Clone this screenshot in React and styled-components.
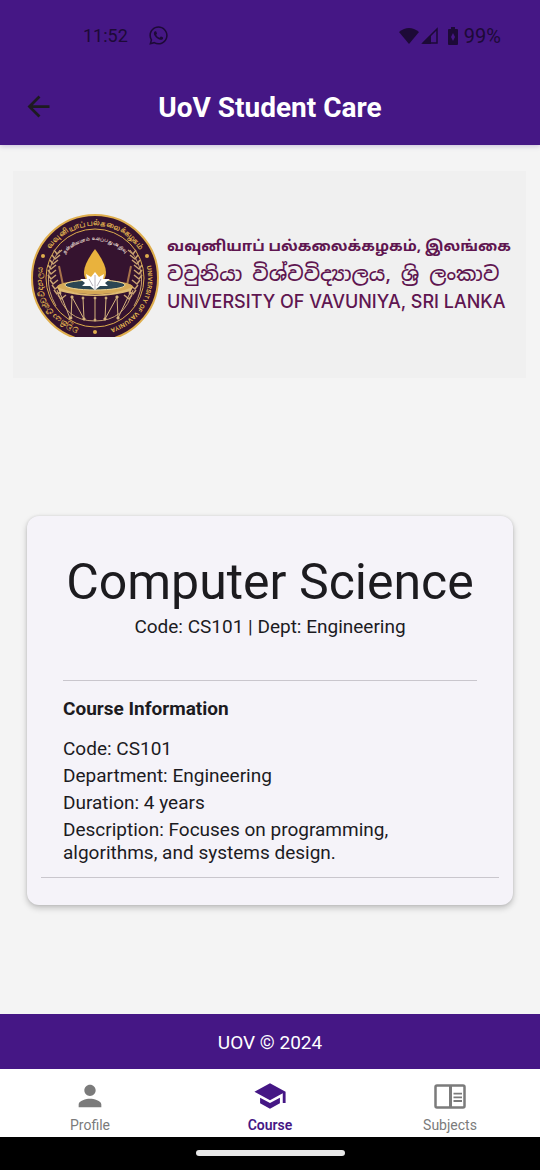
import React from 'react';
import styled, { createGlobalStyle } from 'styled-components';
import { MdArrowBack, MdPerson, MdSchool } from 'react-icons/md';
import { FaWhatsapp } from 'react-icons/fa';

const PURPLE = '#451785';
const PLUM = '#5f1650';
const GOLD = '#dfae4d';

const GlobalStyle = createGlobalStyle`
  *, *::before, *::after { box-sizing: border-box; }
  body {
    margin: 0;
    background: #f4f4f4;
    color: #1c1b1f;
    font-family: Roboto, "Noto Sans", sans-serif;
  }
`;

const Screen = styled.div`
  min-height: 100vh;
  display: flex;
  flex-direction: column;
`;

const Header = styled.header`
  background: ${PURPLE};
  box-shadow: 0 1px 5px rgba(69, 23, 133, 0.25);
`;

const StatusBar = styled.div`
  height: 71px;
  padding: 0 39px 0 83px;
  display: flex;
  align-items: center;
  justify-content: space-between;
  color: #1d0a37;
`;

const StatusGroup = styled.div`
  display: flex;
  align-items: center;
  gap: ${({ $gap }) => $gap}px;
  svg { display: block; }
`;

const StatusText = styled.span`
  font-size: ${({ $size }) => $size}px;
  line-height: 24px;
`;

const AppBar = styled.div`
  height: 74px;
  padding: 0 22px;
  display: grid;
  grid-template-columns: 33px 1fr 33px;
  align-items: center;
`;

const BackButton = styled.button`
  display: flex;
  padding: 0 0 4px;
  border: 0;
  background: none;
  color: #1d1b20;
  cursor: pointer;
`;

const AppTitle = styled.h1`
  margin: 0;
  text-align: center;
  color: #fff;
  font-size: 28px;
  line-height: 36px;
  font-weight: 700;
`;

const Main = styled.main`
  flex: 1;
  display: flex;
  flex-direction: column;
  padding: 26px 14px 0 13px;
`;

const Banner = styled.section`
  display: flex;
  align-items: flex-start;
  gap: 8px;
  padding: 43px 16px 40px 18px;
  background: #f0f0f0;
`;

const Emblem = styled.svg`
  flex: none;
  display: block;
  width: 128px;
  height: 124px;
`;

const UniversityName = styled.div`
  flex: 1;
  min-width: 0;
  padding-top: 20px;
  color: ${PLUM};
  white-space: nowrap;
`;

const NameLine = styled.p`
  margin: 0;
  font-family: ${({ $family }) => $family};
  font-size: ${({ $size }) => $size}px;
  font-weight: ${({ $weight }) => $weight};
  line-height: 27px;
`;

const CardArea = styled.div`
  flex: 1;
  display: flex;
  flex-direction: column;
  justify-content: center;
  padding: 28px 13px 0 14px;
`;

const Card = styled.article`
  padding: 36px 14px 27px;
  border-radius: 12px;
  background: #f5f3f9;
  box-shadow: 0 3px 6px rgba(0, 0, 0, 0.22), 0 0 3px rgba(0, 0, 0, 0.1);
`;

const CardHead = styled.div`
  text-align: center;
`;

const CourseName = styled.h2`
  margin: 0;
  font-size: 50px;
  line-height: 60px;
  font-weight: 400;
`;

const Text = styled.p`
  margin: 0;
  font-size: 19px;
  line-height: 23px;
`;

const CourseSummary = styled(Text)`
  margin-top: 3px;
`;

const Details = styled.section`
  margin: 42px 22px 0;
  padding-top: 16px;
  border-top: 1px solid #c9c6cd;
`;

const DetailsTitle = styled.h3`
  margin: 0 0 17px;
  font-size: 19px;
  line-height: 23px;
  font-weight: 700;
`;

const DetailList = styled.div`
  display: flex;
  flex-direction: column;
  gap: 4px;
`;

const Divider = styled.hr`
  margin: 13px 0 0;
  border: 0;
  border-top: 1px solid #c9c6cd;
`;

const Footer = styled.footer`
  padding: 17px 16px 15px;
  background: ${PURPLE};
  color: #fff;
  text-align: center;
  font-size: 19px;
  line-height: 23px;
`;

const TabBar = styled.nav`
  display: grid;
  grid-template-columns: repeat(3, 1fr);
  background: #fff;
`;

const Tab = styled.a`
  display: flex;
  flex-direction: column;
  align-items: center;
  gap: 3px;
  padding: 10px 0 3px;
  color: ${({ $active }) => ($active ? PURPLE : '#7b7b7b')};
  font-size: 14px;
  line-height: 18px;
  font-weight: ${({ $active }) => ($active ? 600 : 400)};
  text-decoration: none;
`;

const GestureBar = styled.div`
  display: flex;
  justify-content: center;
  padding: 13px 0 14px;
  background: #000;
`;

const GestureHandle = styled.div`
  width: 149px;
  height: 6px;
  border-radius: 3px;
  background: #e8e8e8;
`;

const LEAVES = [-4, -3, -2, -1, 0, 1, 2, 3, 4, 5];

function Wreath({ side }) {
  return (
    <g transform={side === 'right' ? 'translate(128 0) scale(-1 1)' : undefined} stroke="#c9a271" strokeWidth="1.5" fill="none">
      <path d="M29 36 Q8 62 25 92" strokeWidth="1" />
      {LEAVES.map((n) => {
        const y = 60 + n * 5;
        const x = 20 + Math.round(n * n * 0.4);
        return <path key={n} d={`M${x - 3} ${y - 4}L${x} ${y}L${x + 5} ${y - 4}`} />;
      })}
    </g>
  );
}

function UniversityEmblem() {
  const pillars = [
    [29, 79, 39, 104], [41, 83, 40, 104], [41, 83, 53, 105], [52, 84, 53, 105],
    [64, 84, 64, 106], [75, 84, 74, 105], [86, 83, 74, 105], [86, 83, 87, 104], [99, 79, 87, 104],
  ];
  return (
    <Emblem viewBox="0 0 128 124" role="img" aria-label="University of Vavuniya emblem">
      <defs>
        <clipPath id="base"><rect width="128" height="123" /></clipPath>
        <path id="arcTop" d="M16 42 A53 53 0 0 1 112 42" />
        <path id="arcInner" d="M26 52 A41 41 0 0 1 102 52" />
        <path id="arcRight" d="M114 46 A53 53 0 0 1 73 116" />
        <path id="arcLeft" d="M55 116 A53 53 0 0 1 14 46" />
      </defs>
      <g clipPath="url(#base)">
        <circle cx="64" cy="64" r="63" fill="#35132f" stroke={GOLD} strokeWidth="2" />
        <circle cx="64" cy="64" r="49" fill="#35132f" stroke={GOLD} strokeWidth="1" />
        <Wreath side="left" />
        <Wreath side="right" />
        <path d="M28 52L32 71M100 52L96 71" stroke="#a7724a" strokeWidth="2" />
        <path d="M26 76Q34 107 64 107Q94 107 102 76" fill="none" stroke="#c9a271" strokeWidth="1" />
        <ellipse cx="64" cy="73" rx="38" ry="7" fill="#d5a957" />
        <ellipse cx="64" cy="71" rx="30" ry="5" fill="#2b4553" stroke="#f0d796" strokeWidth="1" />
        <path d="M26 73Q64 88 102 73L100 77Q64 87 28 77Z" fill="#dfbb72" />
        <path d="M64 35Q53 50 53 58Q53 69 64 69Q75 69 75 58Q75 50 64 35Z" fill="#e9b23d" />
        <path d="M64 58L68 63L73 60L72 65L79 65L74 69L77 72L69 72L64 76L59 72L51 72L54 69L49 65L56 65L55 60L60 63Z" fill="#fff" />
        <path d="M64 61V75M58 65L62 72M70 65L66 72" stroke="#b5b0ba" strokeWidth="1" fill="none" />
        <g stroke="#d6b47e" strokeWidth="1" fill="#d6b47e">
          {pillars.map(([x1, y1, x2, y2]) => (
            <g key={`${x1}-${x2}`}>
              <path d={`M${x1} ${y1}L${x2} ${y2}`} />
              <circle cx={x1} cy={y1} r="1" />
              <circle cx={x2} cy={y2} r="1" />
            </g>
          ))}
        </g>
        <g fill={GOLD}>
          <circle cx="12" cy="42" r="2" />
          <circle cx="116" cy="42" r="2" />
          <circle cx="64" cy="118" r="2" />
        </g>
        <g fill={GOLD} fontFamily="Inter, 'Noto Sans', sans-serif" fontWeight="700" textAnchor="middle">
          <text fontSize="8"><textPath href="#arcTop" startOffset="50%">வவுனியாப் பல்கலைக்கழகம்</textPath></text>
          <text fontSize="5" fill="#e6d9ce"><textPath href="#arcInner" startOffset="50%">நன்னிலமாம் உலப்பது அறிவு</textPath></text>
          <text fontSize="6"><textPath href="#arcRight" startOffset="50%">UNIVERSITY OF VAVUNIYA</textPath></text>
          <text fontSize="8"><textPath href="#arcLeft" startOffset="50%">වවුනියා විශ්වවිද්‍යාලය</textPath></text>
        </g>
      </g>
    </Emblem>
  );
}

function SignalIcon() {
  return (
    <svg width="18" height="18" viewBox="0 0 18 18" aria-hidden="true">
      <path d="M16 2V16H2Z" fill="none" stroke="currentColor" strokeWidth="1.5" />
      <path d="M1 17L10 8V17Z" fill="currentColor" />
    </svg>
  );
}

function WifiIcon() {
  return (
    <svg width="20" height="18" viewBox="0 0 20 18" aria-hidden="true">
      <path d="M0 5Q10 -3 20 5L10 17Z" fill="currentColor" />
    </svg>
  );
}

function BatteryIcon() {
  return (
    <svg width="12" height="18" viewBox="0 0 12 18" aria-hidden="true">
      <path d="M4 0H8V2H10Q11 2 11 3V17Q11 18 10 18H2Q1 18 1 17V3Q1 2 2 2H4Z" fill="currentColor" />
      <path d="M6 6L8 10L6 14L4 10Z" fill={PURPLE} />
    </svg>
  );
}

function ReaderIcon({ size }) {
  return (
    <svg width={size} height={size} viewBox="0 0 34 34" fill="none" stroke="currentColor" aria-hidden="true">
      <rect x="2.5" y="6.5" width="29" height="22" rx="1.5" strokeWidth="2.5" />
      <path d="M17.5 6V29" strokeWidth="3" />
      <path d="M20.5 14.7H29M20.5 18.3H29M20.5 22H29" strokeWidth="1.8" />
    </svg>
  );
}

const DETAILS = [
  'Code: CS101',
  'Department: Engineering',
  'Duration: 4 years',
  'Description: Focuses on programming, algorithms, and systems design.',
];

const TABS = [
  { label: 'Profile', Icon: MdPerson },
  { label: 'Course', Icon: MdSchool, active: true },
  { label: 'Subjects', Icon: ReaderIcon },
];

export default function App() {
  return (
    <Screen>
      <GlobalStyle />
      <Header>
        <StatusBar>
          <StatusGroup $gap={20}>
            <StatusText $size={18}>11:52</StatusText>
            <FaWhatsapp size={21} />
          </StatusGroup>
          <StatusGroup $gap={8}>
            <StatusGroup $gap={2}>
              <WifiIcon />
              <SignalIcon />
            </StatusGroup>
            <StatusGroup $gap={5}>
              <BatteryIcon />
              <StatusText $size={20}>99%</StatusText>
            </StatusGroup>
          </StatusGroup>
        </StatusBar>
        <AppBar>
          <BackButton type="button" aria-label="Back"><MdArrowBack size={33} /></BackButton>
          <AppTitle>UoV Student Care</AppTitle>
        </AppBar>
      </Header>
      <Main>
        <Banner>
          <UniversityEmblem />
          <UniversityName>
            <NameLine lang="ta" $family="'Noto Sans Tamil', 'Noto Sans', sans-serif" $size={15} $weight={700}>வவுனியாப் பல்கலைக்கழகம், இலங்கை</NameLine>
            <NameLine lang="si" $family="'Noto Sans Sinhala', 'Noto Sans', sans-serif" $size={20} $weight={500}>වවුනියා විශ්වවිද්‍යාලය, ශ්‍රි ලංකාව</NameLine>
            <NameLine $family="Inter, sans-serif" $size={18} $weight={500}>UNIVERSITY OF VAVUNIYA, SRI LANKA</NameLine>
          </UniversityName>
        </Banner>
        <CardArea>
          <Card>
            <CardHead>
              <CourseName>Computer Science</CourseName>
              <CourseSummary>Code: CS101 | Dept: Engineering</CourseSummary>
            </CardHead>
            <Details>
              <DetailsTitle>Course Information</DetailsTitle>
              <DetailList>
                {DETAILS.map((line) => <Text key={line}>{line}</Text>)}
              </DetailList>
            </Details>
            <Divider />
          </Card>
        </CardArea>
      </Main>
      <Footer>UOV © 2024</Footer>
      <TabBar>
        {TABS.map(({ label, Icon, active }) => (
          <Tab key={label} href={`#${label.toLowerCase()}`} $active={active} aria-current={active ? 'page' : undefined}>
            <Icon size={34} />
            {label}
          </Tab>
        ))}
      </TabBar>
      <GestureBar><GestureHandle /></GestureBar>
    </Screen>
  );
}
